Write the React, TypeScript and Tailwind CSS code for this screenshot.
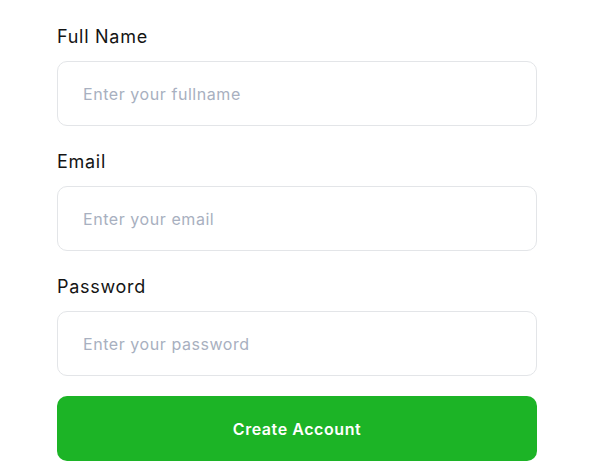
export default function App() {
  const fields = [
    { label: 'Full Name', placeholder: 'Enter your fullname', type: 'text' },
    { label: 'Email', placeholder: 'Enter your email', type: 'email' },
    { label: 'Password', placeholder: 'Enter your password', type: 'password' },
  ];

  return (
    <div className="min-h-screen bg-white font-['Inter',sans-serif]">
      <form className="w-[480px] ml-[57px] pt-[23px] flex flex-col">
        {fields.map((f, i) => (
          <div key={f.label} className={`flex flex-col ${i > 0 ? 'mt-[22px]' : ''}`}>
            <label className="text-[18px] leading-[27px] tracking-[0.04em] text-[#141414] mb-[11px]">{f.label}</label>
            <input
              type={f.type}
              placeholder={f.placeholder}
              className="h-[65px] w-full rounded-[10px] border border-[#e3e5e8] px-[25px] text-[16px] tracking-[0.035em] text-[#141414] placeholder:text-[#a8b0c0] outline-none"
            />
          </div>
        ))}
        <button
          type="button"
          className="mt-[20px] h-[65px] w-full rounded-[10px] bg-[#1cb426] text-white text-[16px] tracking-[0.035em] font-semibold"
        >
          Create Account
        </button>
      </form>
    </div>
  );
}
